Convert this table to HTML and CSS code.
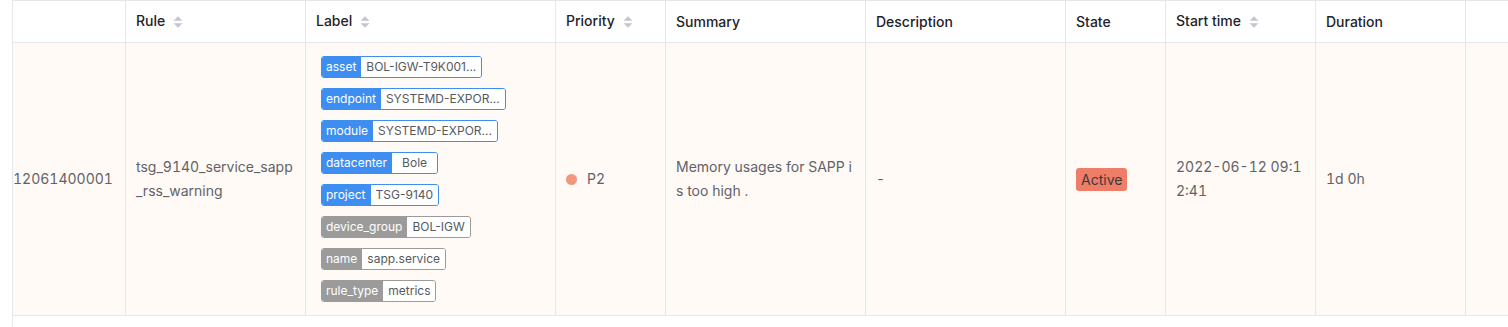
FILE: index.html
```html
<!DOCTYPE html>
<html lang="en">
<head>
<meta charset="utf-8">
<title>Alerts</title>
<link rel="stylesheet" href="styles.css">
</head>
<body>
<div class="table-wrap">
  <div class="grid">
    <div class="th"></div>
    <div class="th sortable"><span>Rule</span><svg class="sort" viewBox="0 0 10 12" width="10" height="12"><path d="M0.5 4.8L5 0.3L9.5 4.8Z"/><path d="M0.5 7.2L5 11.7L9.5 7.2Z"/></svg></div>
    <div class="th sortable"><span>Label</span><svg class="sort" viewBox="0 0 10 12" width="10" height="12"><path d="M0.5 4.8L5 0.3L9.5 4.8Z"/><path d="M0.5 7.2L5 11.7L9.5 7.2Z"/></svg></div>
    <div class="th sortable"><span>Priority</span><svg class="sort" viewBox="0 0 10 12" width="10" height="12"><path d="M0.5 4.8L5 0.3L9.5 4.8Z"/><path d="M0.5 7.2L5 11.7L9.5 7.2Z"/></svg></div>
    <div class="th"><span>Summary</span></div>
    <div class="th"><span>Description</span></div>
    <div class="th"><span>State</span></div>
    <div class="th sortable"><span>Start time</span><svg class="sort" viewBox="0 0 10 12" width="10" height="12"><path d="M0.5 4.8L5 0.3L9.5 4.8Z"/><path d="M0.5 7.2L5 11.7L9.5 7.2Z"/></svg></div>
    <div class="th"><span>Duration</span></div>
    <div class="th"></div>

    <div class="td id"><span>12061400001</span></div>
    <div class="td"><span class="wrap">tsg_9140_service_sapp_rss_warning</span></div>
    <div class="td labels">
      <span class="tag blue"><span class="k">asset</span><span class="v">BOL-IGW-T9K001...</span></span>
      <span class="tag blue"><span class="k">endpoint</span><span class="v">SYSTEMD-EXPOR...</span></span>
      <span class="tag blue"><span class="k">module</span><span class="v">SYSTEMD-EXPOR...</span></span>
      <span class="tag blue"><span class="k">datacenter</span><span class="v short">Bole</span></span>
      <span class="tag blue"><span class="k">project</span><span class="v">TSG-9140</span></span>
      <span class="tag gray"><span class="k">device_group</span><span class="v">BOL-IGW</span></span>
      <span class="tag gray"><span class="k">name</span><span class="v">sapp.service</span></span>
      <span class="tag gray"><span class="k">rule_type</span><span class="v">metrics</span></span>
    </div>
    <div class="td"><span class="dot"></span><span>P2</span></div>
    <div class="td"><span class="wrap">Memory usages for SAPP is too high .</span></div>
    <div class="td"><span>-</span></div>
    <div class="td"><span class="badge">Active</span></div>
    <div class="td"><span class="wrap">2022-06-12 09:12:41</span></div>
    <div class="td"><span>1d 0h</span></div>
    <div class="td"></div>
  </div>
</div>
</body>
</html>
```

FILE: styles.css
```css
* { box-sizing: border-box; }

html, body {
  margin: 0;
  padding: 0;
  background: #ffffff;
  overflow: hidden;
}

body {
  font-family: Inter, "Noto Sans", "Liberation Sans", sans-serif;
  font-size: 14px;
  font-variant-numeric: tabular-nums;
  padding-left: 12px;
}

.table-wrap {
  height: 100vh;
  border-left: 1px solid #e4e7ec;
  border-top: 1px solid #e4e7ec;
  width: 1496px;
  overflow: hidden;
}

.grid {
  display: grid;
  grid-template-columns: 113px 180px 250px 110px 200px 200px 100px 150px 150px 100px;
}

.th {
  height: 42px;
  display: flex;
  align-items: center;
  padding: 0 10px;
  border-right: 1px solid #e4e7ec;
  border-bottom: 1px solid #e4e7ec;
  background: #ffffff;
  color: #1f2329;
  font-weight: 500;
  white-space: nowrap;
}

.th.sortable {
  padding-bottom: 2px;
}

.sort {
  margin-left: 8px;
  margin-top: 3px;
  fill: #c3c6cc;
  flex: none;
}

.td {
  display: flex;
  align-items: center;
  padding: 0 10px;
  border-right: 1px solid #e4e7ec;
  border-bottom: 1px solid #e4e7ec;
  background: #fffaf6;
  color: #5f6368;
  line-height: 24px;
}

.td.id {
  padding-left: 0;
}

.wrap {
  word-break: break-all;
}

.labels {
  flex-direction: column;
  align-items: flex-start;
  gap: 10px;
  padding: 13px 10px 13px 15px;
}

.tag {
  display: inline-flex;
  height: 22px;
  border: 1px solid;
  border-radius: 3px;
  overflow: hidden;
  font-size: 12px;
  line-height: 20px;
  white-space: nowrap;
  font-variant-numeric: normal;
}

.tag.blue { border-color: #3d8ef0; }
.tag.gray { border-color: #9b9b9b; }

.tag .k {
  padding: 0 5px 0 4px;
  color: #ffffff;
  font-weight: 400;
}

.tag.blue .k { background: #3d8ef0; }
.tag.gray .k { background: #9b9b9b; }

.tag .v {
  padding: 0 5px;
  background: #ffffff;
  color: #555a60;
}

.tag .v.short {
  min-width: 45px;
  text-align: center;
}

.dot {
  width: 11px;
  height: 11px;
  border-radius: 50%;
  background: #f4957d;
  margin-right: 10px;
  flex: none;
}

.badge {
  display: inline-block;
  padding: 0 5px;
  line-height: 23px;
  border-radius: 3px;
  background: #ef7e68;
  color: #3b3b3b;
}
```
